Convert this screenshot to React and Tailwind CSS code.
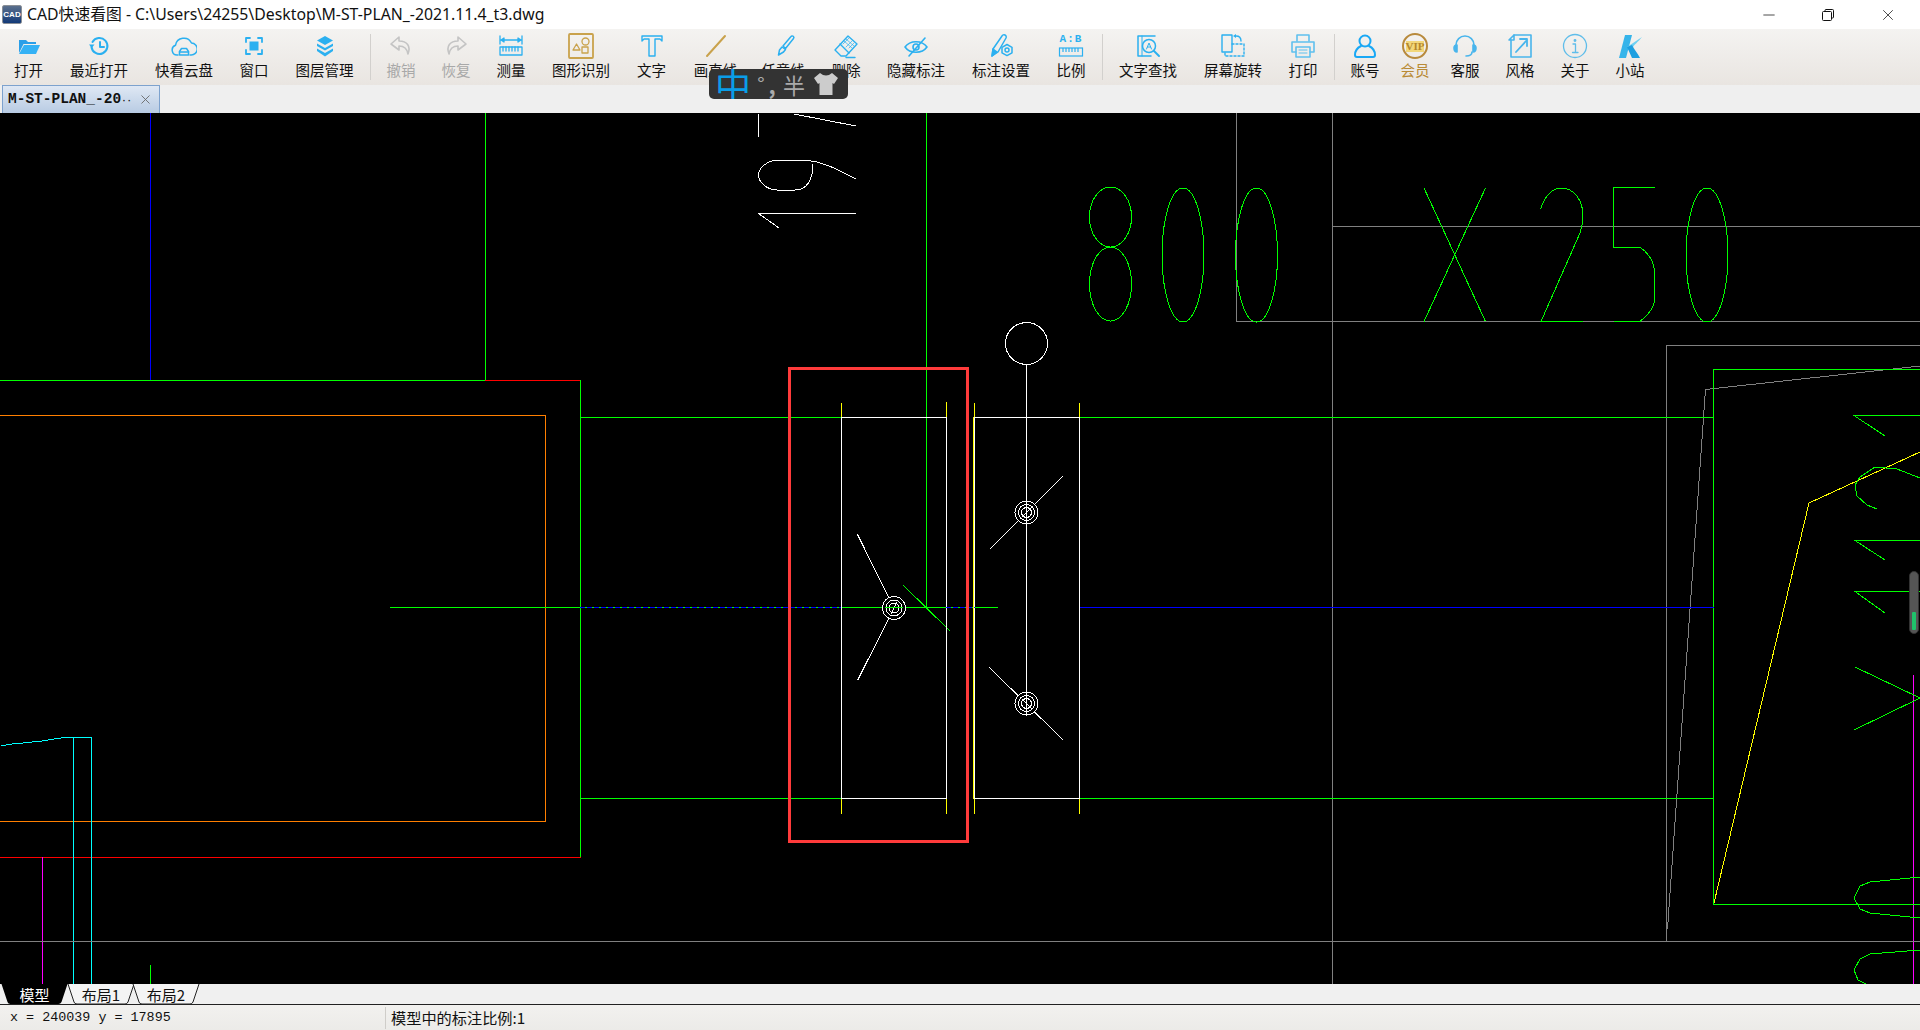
import { X, Minus } from 'lucide-react'

const B = '#2bb0f0'
const cjk = "font-['Noto_Sans_CJK_SC',sans-serif]"

const Ico = ({ children, stroke = B, sw = 1.6 }) => (
  <svg width="26" height="26" viewBox="0 0 26 26" fill="none" stroke={stroke} strokeWidth={sw} strokeLinecap="round" strokeLinejoin="round">
    {children}
  </svg>
)

const icons = {
  open: <Ico stroke="none"><path fill="#2a9fe8" d="M3 7h7l2 2h8v2H7.500L3 20z" /><path fill="#35b2f5" d="M8 12h16l-4 9H3z" /></Ico>,
  recent: <Ico sw="2"><path d="M6.500 9a8 8 0 1 1-1 5" /><path d="M3 11.500h5.500l-2.750 3.500z" fill={B} stroke="none" /><path d="M14 9v5h4" /></Ico>,
  cloud: <Ico sw="1.500"><path d="M7 22H6A5 5 0 0 1 4.500 12.300 8.500 8.500 0 0 1 20.500 10 6 6 0 0 1 20 22h-1" /><path d="M8.500 22v-3.500l2-3h5l2 3V22z" /><path d="M8.500 19h9" /></Ico>,
  window: <Ico sw="1.800"><path d="M5 9V5h4M17 5h4v4M21 17v4h-4M9 21H5v-4" /><rect x="8.500" y="8.500" width="9" height="9" fill={B} stroke="none" /></Ico>,
  layers: <Ico stroke="none"><path fill="#2bb0f0" d="M13 3l8 4.500-8 4.500-8-4.500z" /><path fill="#2bb0f0" d="M5 10.500l8 4.500 8-4.500v2.500l-8 4.500-8-4.500z" /><path fill="#2bb0f0" d="M5 15.500l8 4.500 8-4.500V18l-8 5.500-8-5.500z" /></Ico>,
  undo: <Ico stroke="#c4c4c4"><path d="M11 4L3 11l8 6v-4c5 0 8 2 9 8 3-8-1-13-9-13z" /></Ico>,
  redo: <Ico stroke="#c4c4c4"><path d="M15 4l8 7-8 6v-4c-5 0-8 2-9 8-3-8 1-13 9-13z" /></Ico>,
  measure: <Ico sw="1.300"><path d="M2 3v8M24 3v8M3 7h20M3 7l3-2v4zM23 7l-3-2v4z" /><rect x="2" y="14" width="22" height="8" /><path d="M5 14v4M8 14v4M11 14v4M14 14v4M17 14v4M20 14v4" /></Ico>,
  shape: <Ico stroke="#c9a24c" sw="1.300"><rect x="1" y="1" width="24" height="24" rx="1" strokeWidth="1.800" /><path d="M5 17l3.500-6 3.500 6z" /><circle cx="17.500" cy="8.500" r="3.500" /><rect x="14" y="14" width="6" height="6" /></Ico>,
  text: <Ico sw="1.400"><path d="M3 3h20v5l-2-2h-5v17h-6V6H5L3 8z" /></Ico>,
  line: <Ico stroke="#c9a24c" sw="2"><path d="M4 23L22 3" /></Ico>,
  pen: <Ico sw="1.500"><path d="M13 13L21 3.500a1.500 1.500 0 0 1 2.500 2L15.500 15.500z" /><path d="M12 14l3.500 2.500-2 2.500-5 3 1-5z" /></Ico>,
  eraser: <Ico sw="1.400"><path d="M15 3l9 8-11 12H8l-6-6z" /><path d="M7 11l9 9" /><path d="M11 8l8 7M13 6l8 7M16 5l-6 6M19 8l-6 6M21 10l-5 5" strokeWidth=".7" /><path d="M13 24.500h9" /></Ico>,
  eye: <Ico sw="1.600"><path d="M2 14c5-7 17-7 22 0-5 7-17 7-22 0z" /><circle cx="13" cy="14" r="3" /><path d="M6 23L22 5" /></Ico>,
  setting: <Ico sw="1.500"><path d="M4 23l1-7L14 3a2 2 0 0 1 4 2l-8 14z" /><path d="M4 23l5-4-4-3z" fill={B} /><circle cx="19" cy="17" r="2" /><path d="M19 11.500l5 2.800v5.500l-5 2.800-5-2.800v-5.500z" /></Ico>,
  find: <Ico sw="1.500"><path d="M20 3H3v20h13" /><path d="M7 3v20" strokeWidth="1" /><circle cx="14" cy="13" r="6.500" /><path d="M19 18l5 5" strokeWidth="2" /><path d="M11.500 16l2.500-6 2.500 6M12.500 14h3" strokeWidth="1" /></Ico>,
  rotate: <Ico sw="1.400"><rect x="2" y="2" width="10" height="17" /><path d="M12 11h12v12H5v-4" strokeDasharray="2 2" /><path d="M16 3c3 0 5 2 5 5" /><path d="M16 1v4l-3-2z" fill={B} stroke="none" /></Ico>,
  print: <Ico stroke="#5fc0ee" sw="1.600"><path d="M7 8V2h12v6" /><path d="M6 19H2V9h22v10h-4" /><rect x="6" y="14" width="14" height="10" /><path d="M9 17h8M9 20h8" strokeWidth="1" /></Ico>,
  user: <Ico stroke="#19a8f5" sw="2"><circle cx="13" cy="8" r="5.500" /><path d="M9 13c-4 2-6 5-6 9 0 1 1 2 2 2h16c1 0 2-1 2-2 0-4-2-7-6-9" /></Ico>,
  vip: (
    <div className="relative w-[26px] h-[26px] rounded-full border-2 border-[#b88a3c] flex items-center justify-center">
      <span className="font-['Liberation_Serif',serif] font-bold text-[11px] leading-none text-[#b5872c] bg-[#f2d77a]">VIP</span>
    </div>
  ),
  service: <Ico stroke="#49b5ec" sw="1.600"><path d="M4 14v-2a9 9 0 0 1 18 0v2" /><path d="M2 15c0-2 1-3 3-3v7c-2 0-3-2-3-4zM24 15c0-2-1-3-3-3v7c2 0 3-2 3-4z" fill="#49b5ec" /><path d="M20 19c0 3-3 4-6 4" /></Ico>,
  style: <Ico stroke="#49b5ec" sw="1.600"><path d="M7 2h17v22H4V7" /><path d="M9 19L20 7M13 6h7v7" strokeWidth="1.800" /><path d="M2 7l5-5v5z" /></Ico>,
  about: <Ico stroke="#5fbdea" sw="1.300"><circle cx="13" cy="13" r="11.500" /><path d="M11 11h2.500v8M10.500 19.500h5.500" /><circle cx="13" cy="7.500" r=".8" fill="#5fbdea" /></Ico>,
  site: <Ico stroke="none"><path fill="#36b4ea" d="M8 2h7L9 25H2z" /><path fill="#6fd0f2" d="M10 14L25 4c-4 5-8 8-9 10z" /><path fill="#1d9fe0" d="M10 14l5-2c2 4 6 9 8 13h-8z" /></Ico>,
}

const ruler = (
  <div className="flex flex-col items-center w-[26px] h-[26px]">
    <span className="font-['Liberation_Mono',monospace] font-bold text-[11px] leading-[12px] text-[#2bb0f0] tracking-[1px]">A:B</span>
    <svg width="26" height="12" viewBox="0 0 26 12" fill="none" stroke={B} strokeWidth="1.200"><rect x="1.500" y="3" width="23" height="8" /><path d="M5 3v4M8 3v4M11 3v4M14 3v4M17 3v4M20 3v4" /></svg>
  </div>
)

const Sep = ({ className }) => <div className={`w-px h-[46px] self-center bg-[#d2d0cd] ${className}`} />

const Tool = ({ w, icon, label, dim, gold }) => (
  <div className={`${w} flex flex-col items-center shrink-0`}>
    <div className="h-[26px] mt-[4px] flex items-center justify-center">{icon}</div>
    <span className={`text-[14.500px] leading-[20px] mt-[1px] whitespace-nowrap ${dim ? 'text-[#a8a8a8]' : gold ? 'text-[#b98a35]' : 'text-[#111]'}`}>{label}</span>
  </div>
)

const g1 = [
  ['w-[57px]', icons.open, '打开'],
  ['w-[84px]', icons.recent, '最近打开'],
  ['w-[86px]', icons.cloud, '快看云盘'],
  ['w-[54px]', icons.window, '窗口'],
  ['w-[87px]', icons.layers, '图层管理'],
]
const g2 = [
  ['w-[60px]', icons.undo, '撤销', true],
  ['w-[50px]', icons.redo, '恢复', true],
  ['w-[60px]', icons.measure, '测量'],
  ['w-[80px]', icons.shape, '图形识别'],
  ['w-[61px]', icons.text, '文字'],
  ['w-[67px]', icons.line, '画直线'],
  ['w-[68px]', icons.pen, '任意线'],
  ['w-[58px]', icons.eraser, '删除'],
  ['w-[82px]', icons.eye, '隐藏标注'],
  ['w-[88px]', icons.setting, '标注设置'],
  ['w-[52px]', ruler, '比例'],
]
const g3 = [
  ['w-[90px]', icons.find, '文字查找'],
  ['w-[80px]', icons.rotate, '屏幕旋转'],
  ['w-[60px]', icons.print, '打印'],
]
const g4 = [
  ['w-[60px]', icons.user, '账号'],
  ['w-[40px]', icons.vip, '会员', false, true],
  ['w-[60px]', icons.service, '客服'],
  ['w-[50px]', icons.style, '风格'],
  ['w-[60px]', icons.about, '关于'],
  ['w-[50px]', icons.site, '小站'],
]
const renderGroup = (list) =>
  list.map(([w, icon, label, dim, gold]) => <Tool key={label} w={w} icon={icon} label={label} dim={dim} gold={gold} />)

// drawing data, page coordinates
const segs = [
  ['#0000ff', 'M150.500 113V380'],
  ['#00ff00', 'M485.500 113V380.500H0'],
  ['#ff0000', 'M485 380.500H580.500V857.500H0'],
  ['#ff7f00', 'M0 415.500H545.500V821.500H0'],
  ['#00ffff', 'M1 746L12 744 23 743 42 741 67 737H91.500V984M73.500 737V984'],
  ['#ff00ff', 'M42.500 857V984M1913.500 675V984'],
  ['#00ff00', 'M150.500 965V984'],
  ['#808080', 'M0 941.500H1920M1332.500 113V984M1332.500 226.500H1920M1236.500 113V321.500H1920'],
  ['#808080', 'M1666.500 941V345.500H1920M1667.500 929L1705.500 389.500 1920 366'],
  ['#00ff00', 'M580.500 417.500H841M1079 417.500H1713.500M580.500 798.500H841M1079 798.500H1713.500'],
  ['#00ff00', 'M580.500 380V857M1713.500 904.500V369.500H1920M1713.500 904.500H1920'],
  ['#00ff00', 'M390 607.500H998M926.500 113V607.500M903 585L950 631'],
  ['#0000ff', 'M1079 607.500H1713.500'],
  ['#ffff00', 'M841.500 403V417M841.500 799V814M946.500 402V417M946.500 799V814M974.500 403V417M974.500 799V814M1079.500 403V417M1079.500 799V814M973.500 417V799'],
  ['#ffffff', 'M841.500 417.500H946.500V798.500H841.500ZM974.500 417.500H1079.500V798.500H974.500Z'],
  ['#ffffff', 'M1026.500 365V703M1063 476L990 549M989 667L1063 740'],
  ['#ffffff', 'M857.500 534.500L894 608 857.500 680.500'],
  ['#ffff00', 'M1714 903L1809 503 1920 452'],
  // 19 dim text
  ['#ffffff', 'M758.500 114V137M794 114L856 126M856 179C838 170 825 162 805 160H777C767 161 758.500 168 758.500 175 758.500 183 768 190 777 190H795C806 190 813 181 813 164M758.500 213.500H856M758.500 213.500L779 228'],
  // right side glyphs
  ['#00ff00', 'M1920 415.500H1854L1885 436M1920 540.500H1855L1885 560M1920 591.500H1855L1885 613M1855 667L1920 698 1854 730'],
  ['#00ff00', 'M1920 478L1897 469 1875 467 1860 477 1855 485 1857 496 1867 505 1877 509'],
  ['#00ff00', 'M1920 877L1870 882 1860 886 1854 898 1860 909 1870 913 1920 918'],
  ['#00ff00', 'M1920 950L1870 954 1860 959 1854 970 1858 980 1866 984'],
  // 800 X 250 dim text
  ['#00ff00', 'M1424 188L1485.500 321.500M1485.500 188L1424 321.500'],
  ['#00ff00', 'M1540.500 209C1545 195 1553 188 1561 188 1574 188 1583 200 1583 216 1583 225 1581 229 1580 233L1541 321.500H1583'],
  ['#00ff00', 'M1654.500 187.500H1613.500V247.500H1640C1648 252 1654.500 262 1654.500 273V300C1654.500 308 1648 315 1640 321.500H1613.500'],
]

const Canvas = () => (
  <div className="h-[871px] shrink-0 relative bg-black overflow-hidden">
    <svg className="block" width="1920" height="871" viewBox="0 113 1920 871" fill="none" shapeRendering="crispEdges">
      {segs.map(([c, d], i) => <path key={i} d={d} stroke={c} />)}
      <path d="M580 607.500H841M946 607.500H975" stroke="#0000ff" strokeDasharray="5 2" />
      {[[1110.500, 217, 21, 30], [1110.500, 284, 21, 37]].map(([cx, cy, rx, ry], i) => (
        <ellipse key={i} cx={cx} cy={cy} rx={rx} ry={ry} stroke="#00ff00" />
      ))}
      {[1183, 1256.500, 1707].map((cx) => <ellipse key={cx} cx={cx} cy={255} rx={21} ry={67} stroke="#00ff00" />)}
      <circle cx="1026.500" cy="343.500" r="21" stroke="#fff" />
      {[[894, 608], [1026.500, 512.500], [1026.500, 703.500]].map(([cx, cy]) => (
        <g key={cy} stroke="#fff">
          <circle cx={cx} cy={cy} r="11.500" fill="#000" />
          <circle cx={cx} cy={cy} r="8" />
          <circle cx={cx} cy={cy} r="5" />
        </g>
      ))}
      <path d="M891 614L897 602M1022 517L1032 507M1022 699L1032 709M1026.500 501V715" stroke="#fff" />
      <path d="M885 607.500H903" stroke="#00ff00" />
    </svg>
    {/* selection box */}
    <div className="absolute left-[788px] top-[254px] w-[181px] h-[476px] border-[3px] border-[#ff3b3b]" />
    {/* floating pill */}
    <div className="absolute left-[1909px] top-[458px] w-[10px] h-[63px] rounded-[5px] bg-[#555] border border-[#333] flex items-end justify-center pb-[3px]">
      <div className="w-[4px] h-[18px] rounded-[1px] bg-[#1fc26b]" />
    </div>
  </div>
)

const SheetTab = ({ w, label, active, shape }) => (
  <div className={`${w} relative flex items-center justify-center h-full`}>
    <svg className="absolute inset-0 w-full h-full" viewBox="0 0 68 20" fill={active ? '#000' : '#f4f4f4'} stroke={active ? 'none' : '#222'}>
      <path d={shape} />
    </svg>
    <span className={`relative text-[15px] leading-none ${active ? 'text-white' : 'text-[#111]'}`}>{label}</span>
  </div>
)

export default function App() {
  return (
    <div className={`relative w-[1920px] h-[1030px] overflow-hidden flex flex-col bg-[#f0f0f0] ${cjk}`}>
      {/* title bar */}
      <div className="h-[29px] bg-white flex items-center shrink-0">
        <div className="ml-[2px] w-[20px] h-[19px] rounded-[2px] bg-gradient-to-b from-[#5a6f8c] to-[#123a78] border border-[#8a8f96] flex items-center justify-center">
          <span className="font-['Liberation_Sans',sans-serif] font-bold text-[8px] leading-none text-white">CAD</span>
        </div>
        <span className="ml-[5px] text-[15.800px] leading-none text-[#111] whitespace-nowrap font-['Noto_Sans','Noto_Sans_CJK_SC',sans-serif]">CAD快速看图 - C:\Users\24255\Desktop\M-ST-PLAN_-2021.11.4_t3.dwg</span>
        <div className="ml-auto mr-[2px] flex items-center text-[#111]">
          <div className="w-[59px] flex justify-center"><Minus size={18} strokeWidth={1} /></div>
          <div className="w-[59px] flex justify-center mr-[1px]">
            <svg width="12" height="12" viewBox="0 0 12 12" fill="none" stroke="#111"><rect x=".5" y="2.500" width="9" height="9" rx="1" /><path d="M3 2.500V1.500a1 1 0 0 1 1-1h6.500a1 1 0 0 1 1 1V8a1 1 0 0 1-1 1h-1" /></svg>
          </div>
          <div className="w-[60px] flex justify-center"><X size={18} strokeWidth={1} /></div>
        </div>
      </div>

      {/* toolbar */}
      <div className="h-[56px] shrink-0 flex bg-gradient-to-b from-[#f4f3f1] to-[#e9e5e1]">
        {renderGroup(g1)}
        <Sep className="ml-[2px]" />
        {renderGroup(g2)}
        <Sep className="ml-[5px]" />
        {renderGroup(g3)}
        <Sep className="ml-[1px]" />
        {renderGroup(g4)}
      </div>

      {/* file tabs */}
      <div className="h-[28px] shrink-0 bg-[#efefef] flex items-end pl-[2px]">
        <div className="w-[158px] h-[28px] flex items-center pl-[5px] border border-b-0 border-[#7da2ce] bg-gradient-to-b from-[#dfe8f4] to-[#b8cbe3]">
          <span className="font-['Liberation_Mono',monospace] font-bold text-[14.500px] leading-none text-[#111] whitespace-nowrap">M-ST-PLAN_-20<span className="text-[9px]">··</span></span>
          <X size={15} strokeWidth={1.4} className="ml-auto mr-[6px] text-[#666]" />
        </div>
      </div>

      <Canvas />

      {/* sheet tabs */}
      <div className="h-[20px] shrink-0 flex">
        <SheetTab w="w-[69px]" label="模型" active shape="M1 0L7 18Q7.500 20 10 20H58Q60 20 61 18L67 0Z" />
        <SheetTab w="w-[68px] -ml-[2px]" label="布局1" shape="M1 0L7 18Q7.500 20 10 20H58Q60 20 61 18L67 0" />
        <SheetTab w="w-[68px] -ml-[3px]" label="布局2" shape="M1 0L7 18Q7.500 20 10 20H58Q60 20 61 18L67 0" />
      </div>
      <div className="h-px bg-[#222] shrink-0" />

      {/* status bar */}
      <div className="flex-1 flex items-center bg-gradient-to-b from-[#f2f1ef] to-[#ecebe8]">
        <span className="w-[385px] pl-[10px] font-['Liberation_Mono',monospace] text-[13.400px] leading-none text-[#111] whitespace-pre">x = 240039 y = 17895</span>
        <div className="w-px h-[22px] bg-[#cfcdc9]" />
        <span className="ml-[5px] text-[15.200px] leading-none text-[#111] whitespace-nowrap">模型中的标注比例:1</span>
      </div>

      {/* IME bar */}
      <div className="absolute left-[709px] top-[69px] w-[139px] h-[30px] rounded-[5px] bg-[#333333] flex items-center overflow-hidden">
        <span className="ml-[6px] w-[34px] text-center text-[36px] leading-[30px] h-[30px] text-[#0a9de8]">中</span>
        <span className="ml-[5px] w-[14px] text-center text-[20px] leading-none text-[#aaa]">°</span>
        <span className="w-[8px] text-center text-[22px] leading-none font-bold text-[#aaa]">,</span>
        <span className="ml-[6px] w-[24px] text-center text-[22px] leading-none text-[#aaa]">半</span>
        <svg className="ml-[7px]" width="26" height="24" viewBox="0 0 26 24"><path fill="#ccc" d="M7 1Q13 6 19 1L25 6 21 12 19.500 11V23H6.500V11L5 12 1 6Z" /></svg>
      </div>
    </div>
  )
}
